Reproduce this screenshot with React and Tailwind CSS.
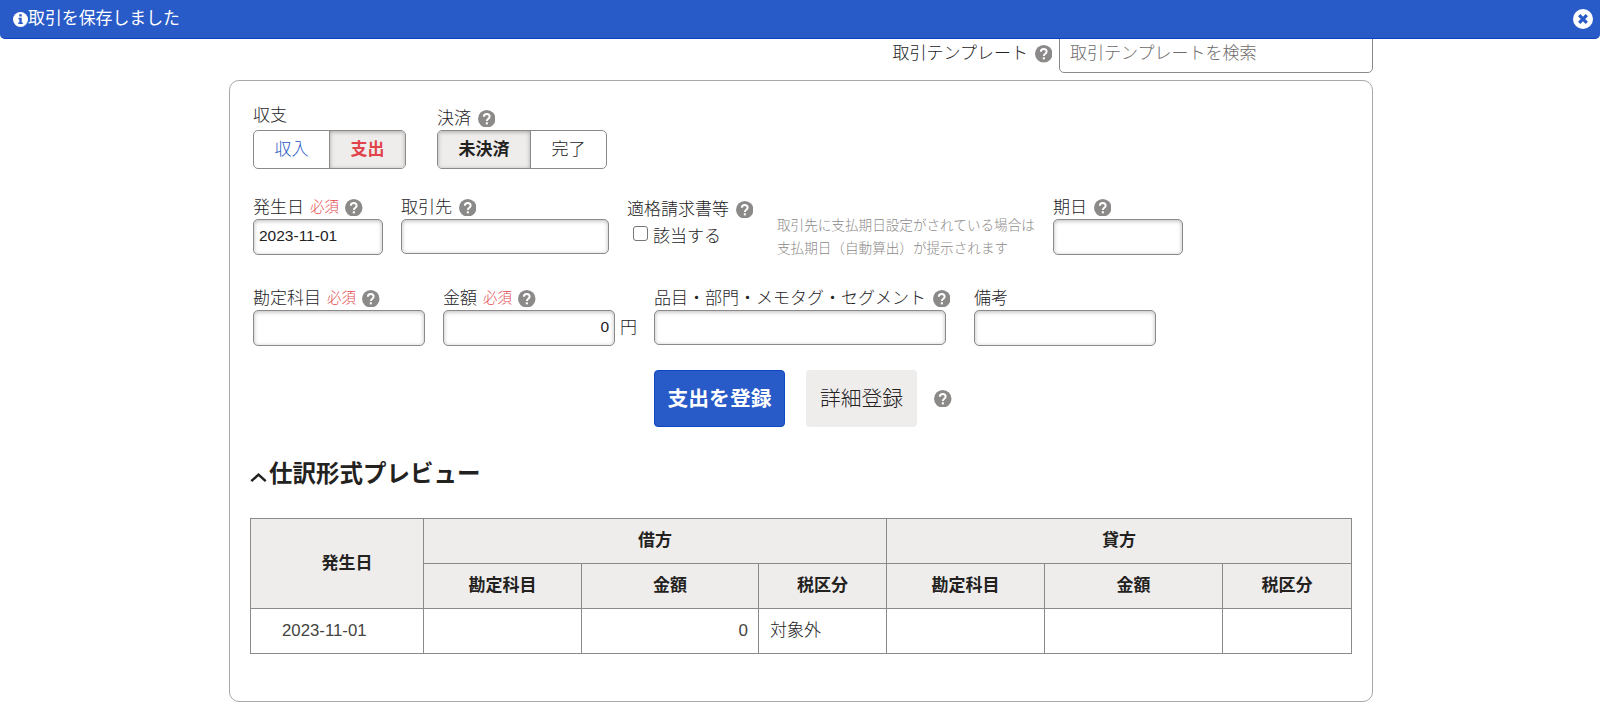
function HelpIcon({ className = "" }) {
  return (
    <svg viewBox="0 0 20 20" className={`size-[17.5px] shrink-0 ${className}`} fill="none" aria-hidden="true">
      <circle cx="10" cy="10" r="10" fill="#8c8989" />
      <path d="M6.7 7.8c0-2 1.4-3.2 3.3-3.2s3.3 1.2 3.3 3c0 2.3-3.2 2.5-3.2 5" stroke="white" strokeWidth="2.2" />
      <rect x="8.9" y="14" width="2.4" height="2.4" fill="white" />
    </svg>
  );
}

function Label({ text, required, help = true, className = "" }) {
  return (
    <div className={`flex h-6 items-center whitespace-nowrap leading-6 ${className}`}>
      <span className="pt-px">{text}</span>
      {required && <span className="ml-[6px] text-[14.4px] text-[#e4484e]">必須</span>}
      {help && <HelpIcon className="ml-[6.5px] mt-px" />}
    </div>
  );
}

const inputBase =
  "block rounded-[5px] border border-[#8c8989] bg-white px-[5px] pb-[2px] font-['Liberation_Sans','Noto_Sans_CJK_JP',sans-serif] text-[15.5px] font-normal text-[#23221e] shadow-[inset_0_1px_4px_rgba(0,0,0,0.28)] outline-none";

function Field({ text, required, help, value, labelClass, inputClass }) {
  return (
    <div>
      <Label text={text} required={required} help={help} className={labelClass} />
      <input className={`${inputBase} ${inputClass}`} defaultValue={value} aria-label={text} />
    </div>
  );
}

const cell = "border border-[#8c8989]";

export default function App() {
  return (
    <div className="h-[712px] w-[1600px] overflow-hidden bg-white font-['Liberation_Sans','Noto_Sans_CJK_JP',sans-serif] text-[17px] font-light text-[#23221e]">
      <header className="relative z-10 flex h-[39px] items-center justify-between rounded-b-[5px] border-b border-[#0a3fc0] bg-[#285ac8] pl-[13px] pr-[7px] text-white">
        <div className="flex items-center font-normal">
          <svg viewBox="0 0 16 16" className="size-[15px]" aria-hidden="true">
            <circle cx="8" cy="8" r="8" fill="white" />
            <path d="M6.7 2.4h2.6v2.3H6.7zM5.8 6h3.5v5.2h1.2v1.7H5.6v-1.7h1.2V7.7h-1z" fill="#285ac8" />
          </svg>
          <span className="text-[16.9px] leading-6">取引を保存しました</span>
        </div>
        <svg viewBox="0 0 20 20" className="size-5" aria-hidden="true">
          <circle cx="10" cy="10" r="10" fill="white" />
          <path d="m6.2 6.2 7.6 7.6m0-7.6-7.6 7.6" stroke="#285ac8" strokeWidth="3.2" />
        </svg>
      </header>

      <div className="-mt-[5px] ml-[229px] flex h-[39px] w-[1144px] items-center justify-end">
        <Label text="取引テンプレート" className="mr-[7px]" />
        <input
          placeholder="取引テンプレートを検索"
          className="h-[39px] w-[314px] rounded-[5px] border border-[#8c8989] bg-white px-[10px] pt-px text-[17px] font-light placeholder:text-[#6e6b6b] placeholder:opacity-100"
        />
      </div>

      <main className="ml-[229px] mt-[7px] h-[622px] w-[1144px] rounded-[10px] border border-[#a9a7a7] pl-[20px] pr-[21px] pt-[22px]">
        <div className="flex h-[66px] items-end gap-[31px] pl-[3px]">
          <div>
            <Label text="収支" help={false} className="mb-[3px]" />
            <div className="flex h-[39px] w-[153px] overflow-hidden rounded-[5px] border border-[#8c8989]">
              <button className="w-[75px] text-[#285ac8]">収入</button>
              <button className="flex-1 border-l border-[#8c8989] bg-[#efedec] font-bold text-[#e2434a] shadow-[inset_0_1px_4px_rgba(0,0,0,0.3)]">支出</button>
            </div>
          </div>
          <div>
            <Label text="決済" />
            <div className="flex h-[39px] w-[170px] overflow-hidden rounded-[5px] border border-[#8c8989]">
              <button className="w-[93px] border-r border-[#8c8989] bg-[#efedec] font-bold shadow-[inset_0_1px_4px_rgba(0,0,0,0.3)]">未決済</button>
              <button className="flex-1">完了</button>
            </div>
          </div>
        </div>

        <div className="mt-[26px] flex h-[61px] items-start pl-[3px]">
          <Field text="発生日" required value="2023-11-01" inputClass="h-9 w-[130px]" />
          <div className="ml-[18px]">
            <Field text="取引先" inputClass="h-[35px] w-[208px]" />
          </div>
          <div className="ml-[18px] w-[126px] pt-[2px]">
            <Label text="適格請求書等" />
            <label className="mt-[3px] flex h-6 items-center gap-[5px] pl-[6px] leading-6">
              <span className="mb-[5px] size-[15px] rounded-[3px] border border-[#767676]" />
              <span className="pt-px">該当する</span>
            </label>
          </div>
          <p className="ml-[24px] mt-[19px] w-[276px] whitespace-nowrap text-[13.6px] leading-[23px] text-[#8c8989]">
            取引先に支払期日設定がされている場合は
            <br />
            支払期日（自動算出）が提示されます
          </p>
          <Field text="期日" inputClass="h-9 w-[130px]" />
        </div>

        <div className="mt-[30px] flex h-[61px] items-start pl-[3px]">
          <Field text="勘定科目" required inputClass="h-9 w-[172px]" />
          <div className="ml-[18px] flex items-end">
            <Field text="金額" required value="0" inputClass="h-9 w-[172px] text-right" />
            <span className="mb-[6px] ml-[5px] w-[17px] leading-6">円</span>
          </div>
          <div className="ml-[17px] w-[292px]">
            <Field text="品目・部門・メモタグ・セグメント" inputClass="h-[35px] w-[292px]" />
          </div>
          <div className="ml-[28px]">
            <Field text="備考" help={false} inputClass="h-9 w-[182px]" />
          </div>
        </div>

        <div className="mt-[23px] flex h-[57px] items-center pl-[404px]">
          <button className="h-[57px] w-[131px] whitespace-nowrap rounded-[4px] border border-[#0f47c2] bg-[#285ac8] text-[20.8px] font-bold text-white">支出を登録</button>
          <button className="ml-[21px] h-[57px] w-[111px] whitespace-nowrap rounded-[4px] bg-[#efedec] text-[20.8px]">詳細登録</button>
          <HelpIcon className="ml-[17px]" />
        </div>

        <h2 className="mt-[29px] flex h-9 items-center text-[23.5px] font-bold">
          <svg viewBox="0 0 18 12" className="mr-px mt-[5px] h-3 w-[18px]" fill="none" stroke="#23221e" strokeWidth="2.5" aria-hidden="true">
            <path d="m1.3 10.2 7.2-6.6 7.2 6.6" />
          </svg>
          <span className="pt-0.5">仕訳形式プレビュー</span>
        </h2>

        <table className="mt-[26px] w-[1101px] table-fixed border-collapse">
          <colgroup>
            <col className="w-[173px]" />
            <col className="w-[158px]" />
            <col className="w-[177px]" />
            <col className="w-[128px]" />
            <col className="w-[158px]" />
            <col className="w-[178px]" />
            <col className="w-[129px]" />
          </colgroup>
          <thead className="bg-[#efedec] font-bold">
            <tr className="h-[45px]">
              <th rowSpan={2} className={`${cell} pl-[20px]`}>発生日</th>
              <th colSpan={3} className={cell}>借方</th>
              <th colSpan={3} className={cell}>貸方</th>
            </tr>
            <tr className="h-[45px]">
              <th className={cell}>勘定科目</th>
              <th className={cell}>金額</th>
              <th className={cell}>税区分</th>
              <th className={cell}>勘定科目</th>
              <th className={cell}>金額</th>
              <th className={cell}>税区分</th>
            </tr>
          </thead>
          <tbody>
            <tr className="h-[45px]">
              <td className={`${cell} pl-[31px] text-[16.8px] text-[#45443f]`}>2023-11-01</td>
              <td className={cell} />
              <td className={`${cell} pr-[10px] text-right text-[#45443f]`}>0</td>
              <td className={`${cell} pl-[11px]`}>対象外</td>
              <td className={cell} />
              <td className={cell} />
              <td className={cell} />
            </tr>
          </tbody>
        </table>
      </main>
    </div>
  );
}
